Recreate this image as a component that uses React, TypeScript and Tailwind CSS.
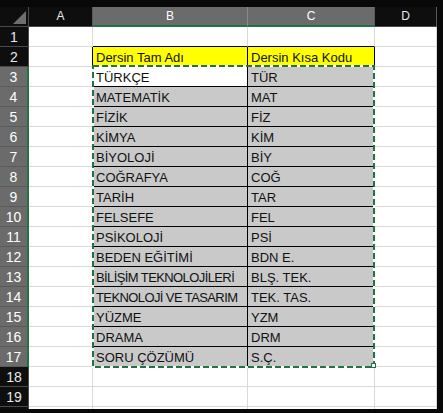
import React from 'react';

const data: [string, string][] = [
  ['TÜRKÇE', 'TÜR'],
  ['MATEMATİK', 'MAT'],
  ['FİZİK', 'FİZ'],
  ['KİMYA', 'KİM'],
  ['BİYOLOJİ', 'BİY'],
  ['COĞRAFYA', 'COĞ'],
  ['TARİH', 'TAR'],
  ['FELSEFE', 'FEL'],
  ['PSİKOLOJİ', 'PSİ'],
  ['BEDEN EĞİTİMİ', 'BDN E.'],
  ['BİLİŞİM TEKNOLOJİLERİ', 'BLŞ. TEK.'],
  ['TEKNOLOJİ VE TASARIM', 'TEK. TAS.'],
  ['YÜZME', 'YZM'],
  ['DRAMA', 'DRM'],
  ['SORU ÇÖZÜMÜ', 'S.Ç.'],
];

function RowHeader({ n, selected }: { n: number; selected: boolean }) {
  return (
    <div
      className={`w-[29px] h-full shrink-0 border-b text-center text-[14px] leading-[19px] pt-[1px] ${
        selected
          ? 'bg-[#6b6b6b] text-white border-b-[#5a5a5a] border-r-2 border-r-[#217346]'
          : 'bg-[#0e0e0e] text-[#e8e8e8] border-b-[#4a4a4a] border-r border-r-[#4a4a4a]'
      }`}
    >
      {n}
    </div>
  );
}

function Row({ n }: { n: number }) {
  const item = n >= 3 && n <= 17 ? data[n - 3] : null;
  const inTable = n >= 2 && n <= 17;
  const selected = n >= 3 && n <= 17;
  const cellBg = n === 2 ? 'bg-[#ffff00]' : n === 3 ? 'bg-white' : item ? 'bg-[#c9c9c9]' : 'bg-white';
  const cellBgC = n === 2 ? 'bg-[#ffff00]' : item ? 'bg-[#c9c9c9]' : 'bg-white';
  const tableBorder = 'border-r border-b border-black';
  const gridBorder = 'border-r border-b border-[#d9d9d9]';
  const text = 'px-[3px] pt-[3px] leading-[16px] text-[13px] text-[#111] whitespace-nowrap overflow-hidden';
  const bText = n === 2 ? 'Dersin Tam Adı' : item ? item[0] : '';
  const cText = n === 2 ? 'Dersin Kısa Kodu' : item ? item[1] : '';
  // long names are squeezed a little, Calibri is narrower than Liberation Sans
  const tight = bText.length > 16 ? 'tracking-[-0.6px]' : '';
  return (
    <div className="flex h-[20px] w-[437px]">
      <RowHeader n={n} selected={selected} />
      <div
        className={`w-[64px] shrink-0 bg-white border-b border-[#d9d9d9] border-r ${
          inTable ? 'border-r-black' : 'border-r-[#d9d9d9]'
        }`}
      />
      <div
        className={`w-[155px] shrink-0 ${cellBg} ${text} ${tight} ${
          inTable ? tableBorder : n === 1 ? 'border-r border-r-[#d9d9d9] border-b border-b-black' : gridBorder
        }`}
      >
        {bText}
      </div>
      <div
        className={`w-[127px] shrink-0 ${cellBgC} ${text} ${
          inTable ? tableBorder : n === 1 ? 'border-r border-r-[#d9d9d9] border-b border-b-black' : gridBorder
        }`}
      >
        {cText}
      </div>
      <div className={`w-[62px] shrink-0 bg-white ${gridBorder}`} />
    </div>
  );
}

export default function App() {
  const rows = Array.from({ length: 19 }, (_, i) => i + 1);
  return (
    <div
      className="relative w-[443px] h-[413px] bg-[#080808] overflow-hidden"
      style={{ fontFamily: '"Liberation Sans", Arial, sans-serif' }}
    >
      <div className="h-[7px]" />
      {/* column headers */}
      <div className="flex h-[20px] w-[437px] text-[12px] leading-[18px]">
        <div className="w-[29px] shrink-0 bg-[#0e0e0e] border-r border-b border-[#4a4a4a] flex items-end justify-end pr-[2px] pb-[2px]">
          <svg width="13" height="13" viewBox="0 0 13 13">
            <polygon points="13,0 13,13 0,13" fill="#6e6e6e" />
          </svg>
        </div>
        <div className="w-[64px] shrink-0 bg-[#0e0e0e] text-[#e8e8e8] text-center border-r border-r-[#5a5a5a] border-b border-b-[#4a4a4a]">
          A
        </div>
        <div className="w-[155px] shrink-0 bg-[#6b6b6b] text-white text-center border-r border-r-[#8a8a8a] border-b-2 border-b-[#217346]">
          B
        </div>
        <div className="w-[127px] shrink-0 bg-[#6b6b6b] text-white text-center border-r border-r-[#5a5a5a] border-b-2 border-b-[#217346]">
          C
        </div>
        <div className="w-[62px] shrink-0 bg-[#0e0e0e] text-[#e8e8e8] text-center border-r border-r-[#5a5a5a] border-b border-b-[#4a4a4a]">
          D
        </div>
      </div>
      {rows.map((n) => (
        <Row key={n} n={n} />
      ))}
      <div className="flex h-[2px] w-[437px]">
        <div className="w-[29px] shrink-0 bg-[#0e0e0e] border-r border-[#4a4a4a]" />
        <div className="w-[64px] shrink-0 bg-white border-r border-[#d9d9d9]" />
        <div className="w-[155px] shrink-0 bg-white border-r border-[#d9d9d9]" />
        <div className="w-[127px] shrink-0 bg-white border-r border-[#d9d9d9]" />
        <div className="w-[62px] shrink-0 bg-white border-r border-[#d9d9d9]" />
      </div>
      {/* copy selection marquee */}
      <svg className="absolute left-0 top-0 pointer-events-none" width="443" height="413">
        <rect x="93" y="66" width="281" height="301" fill="none" stroke="#ffffff" strokeWidth="2" />
        <rect
          x="93"
          y="66"
          width="281"
          height="301"
          fill="none"
          stroke="#217346"
          strokeWidth="2"
          strokeDasharray="6 3"
        />
        <rect x="371.5" y="363.5" width="4" height="4" fill="#ffffff" stroke="#217346" strokeWidth="1" />
      </svg>
    </div>
  );
}
